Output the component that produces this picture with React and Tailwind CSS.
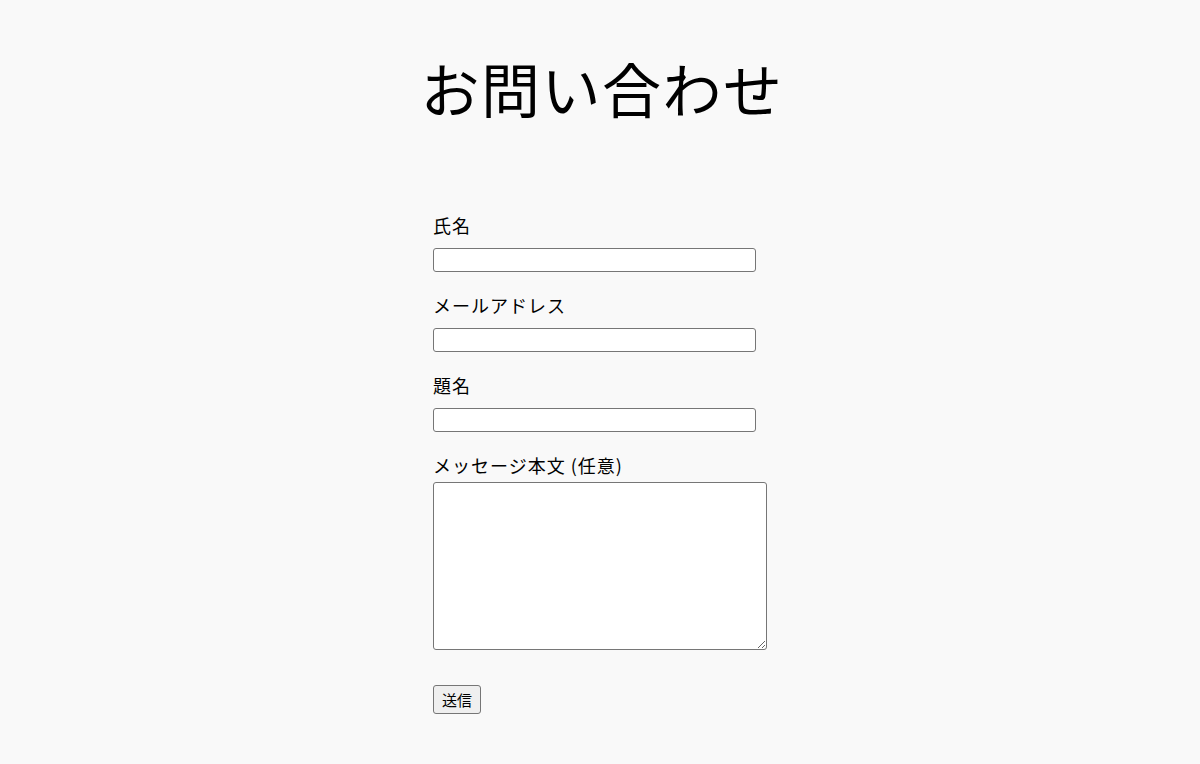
import React from "react";

const font = { fontFamily: '"Noto Sans CJK JP", "Noto Sans", sans-serif' };

const Field = ({ label, children, gap = "mb-[9px]" }) => (
  <div>
    <label className={`block text-[18px] leading-[27px] tracking-[1px] text-black ${gap}`}>{label}</label>
    {children}
  </div>
);

const inputClass =
  "block w-[323px] h-[24px] bg-white border border-[#767676] rounded-[3px] px-1 text-[14px] outline-none";

export default function App() {
  return (
    <div className="min-h-[764px] w-full bg-[#f9f9f9] text-black" style={font}>
      <h1 className="pt-[45px] pl-[4px] text-center text-[59px] leading-[86px] tracking-[1.5px] font-normal">
        お問い合わせ
      </h1>
      <form className="mx-auto mt-[81px] w-[334px]" onSubmit={(e) => e.preventDefault()}>
        <div className="flex flex-col gap-[20px]">
          <Field label="氏名">
            <input type="text" className={inputClass} />
          </Field>
          <Field label="メールアドレス">
            <input type="email" className={inputClass} />
          </Field>
          <Field label="題名">
            <input type="text" className={inputClass} />
          </Field>
          <Field label="メッセージ本文 (任意)" gap="mb-[3px]">
            <textarea className="block w-[334px] h-[168px] bg-white border border-[#767676] rounded-[3px] p-1 text-[14px] outline-none" />
          </Field>
        </div>
        <button
          type="submit"
          className="mt-[35px] h-[29px] px-[8px] text-[15px] leading-none bg-[#efefef] border border-[#767676] rounded-[3px] text-black"
        >
          送信
        </button>
      </form>
    </div>
  );
}
